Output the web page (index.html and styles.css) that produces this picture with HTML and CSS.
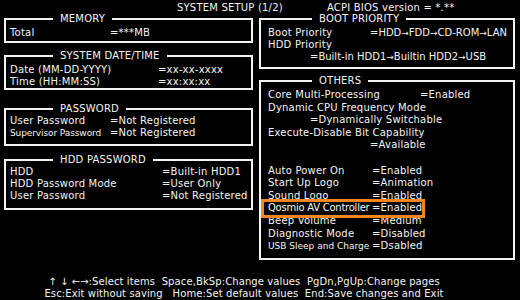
FILE: index.html
```html
<!DOCTYPE html>
<html>
<head>
    <meta charset="utf-8">
    <link rel="stylesheet" href="styles.css">
    <title>System Setup</title>
</head>
<body>
    <div class="header">
        <span class="title">SYSTEM SETUP (1/2)</span>
        <span>ACPI BIOS version = *.**</span>
    </div>

    <div class="columns">
        <div class="col left">
            <fieldset class="box memory">
                <legend>MEMORY</legend>
                <div class="row"><span class="key">Total</span><span>=***MB</span></div>
            </fieldset>

            <fieldset class="box datetime">
                <legend>SYSTEM DATE/TIME</legend>
                <div class="row"><span class="key">Date (MM-DD-YYYY)</span><span>=xx-xx-xxxx</span></div>
                <div class="row"><span class="key">Time (HH:MM:SS)</span><span>=xx:xx:xx</span></div>
            </fieldset>

            <fieldset class="box password">
                <legend>PASSWORD</legend>
                <div class="row"><span class="key">User Password</span><span>=Not Registered</span></div>
                <div class="row"><span class="key narrow">Supervisor Password</span><span>=Not Registered</span></div>
            </fieldset>

            <fieldset class="box hddpass">
                <legend>HDD PASSWORD</legend>
                <div class="row"><span class="key">HDD</span><span>=Built-in HDD1</span></div>
                <div class="row"><span class="key">HDD Password Mode</span><span>=User Only</span></div>
                <div class="row"><span class="key">User Password</span><span>=Not Registered</span></div>
            </fieldset>
        </div>

        <div class="col right">
            <fieldset class="box boot">
                <legend>BOOT PRIORITY</legend>
                <div class="row"><span class="key">Boot Priority</span><span class="chain">=HDD<span class="arr">→</span>FDD<span class="arr">→</span>CD-ROM<span class="arr">→</span>LAN</span></div>
                <div class="row">HDD Priority</div>
                <div class="row indent chain">=Built-in HDD1<span class="arr">→</span>Builtin HDD2<span class="arr">→</span>USB</div>
            </fieldset>

            <fieldset class="box others">
                <legend>OTHERS</legend>
                <div class="row"><span class="key wide">Core Multi-Processing</span><span>=Enabled</span></div>
                <div class="row">Dynamic CPU Frequency Mode</div>
                <div class="row indent">=Dynamically Switchable</div>
                <div class="row">Execute-Disable Bit Capability</div>
                <div class="row indent far">=Available</div>
                <div class="row"></div>
                <div class="row"><span class="key">Auto Power On</span><span>=Enabled</span></div>
                <div class="row"><span class="key">Start Up Logo</span><span>=Animation</span></div>
                <div class="row"><span class="key">Sound Logo</span><span>=Enabled</span></div>
                <div class="row selected"><span class="key tight">Qosmio AV Controller</span><span>=Enabled</span></div>
                <div class="row"><span class="key">Beep Volume</span><span>=Medium</span></div>
                <div class="row"><span class="key">Diagnostic Mode</span><span>=Disabled</span></div>
                <div class="row"><span class="key small">USB Sleep and Charge</span><span>=Dsabled</span></div>
            </fieldset>
        </div>
    </div>

    <div class="footer">
        <div>↑ ↓ ←→:Select items  Space,BkSp:Change values  PgDn,PgUp:Change pages</div>
        <div>Esc:Exit without saving   Home:Set default values  End:Save changes and Exit</div>
    </div>
</body>
</html>
```

FILE: styles.css
```css
body {margin: 0; padding: 2px 0 0 4px; background-color: #000; color: #f4f4f4; font-family: "DejaVu Sans", sans-serif; font-size: 10px; line-height: 12px; letter-spacing: 0.2px;}

.header {display: flex; padding-left: 173px; white-space: pre;}
.header .title {width: 150px;}

.columns {display: grid; grid-template-columns: 249px 256px; column-gap: 6px; margin-top: -1px;}
.col {display: flex; flex-direction: column;}

.box {margin: 0; border: 2px solid #f4f4f4; min-width: 0;}
.box legend {padding: 0 7px; line-height: 12px;}
.left .box {padding: 2px 4px 2px 4px;}
.left .box legend {margin-left: 43px;}
.right .box {padding: 2px 7px 4px 7px;}
.right .box legend {margin-left: 44px;}

.row {display: flex; height: 12px; white-space: pre;}
.key {flex: none;}
.narrow {font-size: 9px; letter-spacing: -0.1px;}
.tight {letter-spacing: -0.25px;}
.small {font-size: 9px; letter-spacing: 0;}
.chain {letter-spacing: 0;}
.arr {font-size: 9px;}

.memory .key {width: 100px;}
.datetime {margin-top: 7px;}
.datetime .key {width: 148px;}
.datetime {padding-bottom: 0 !important;}
.password {margin-top: 13px;}
.password .key {width: 100px;}
.left .password {padding: 0 4px 5px 4px;}
.hddpass {margin-top: 8px;}
.hddpass .key {width: 152px;}
.left .hddpass {padding: 0 4px 6px 4px;}

.boot .key {width: 102px;}
.indent {padding-left: 42px;}
.indent.far {padding-left: 102px;}

.others {margin-top: 6px;}
.right .others {padding: 2px 7px 5px 7px;}
.others .row {height: 12.6px; line-height: 12.6px;}
.others .key {width: 104px;}
.others .key.wide {width: 152px;}
.others .selected {width: 154px; margin-left: -4px; padding-left: 4px; outline: 3px solid #f7861c;}

.footer {margin-top: 16px; width: 480px; text-align: center; letter-spacing: 0.1px;}
.footer div {white-space: pre;}
```
